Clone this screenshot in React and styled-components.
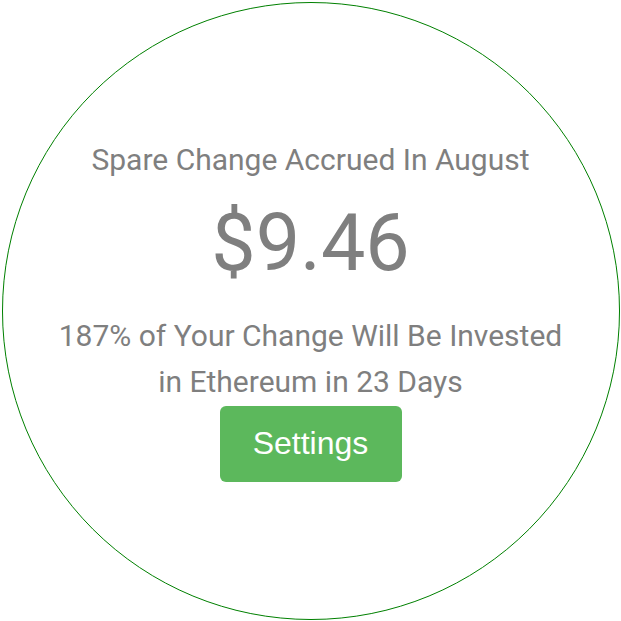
import React from "react";
import styled, { createGlobalStyle } from "styled-components";

const Global = createGlobalStyle`
  html, body { margin: 0; padding: 0; background: #fff; }
  body { font-family: Roboto, "Noto Sans", sans-serif; }
`;

const Page = styled.div`
  width: 621px;
  height: 621px;
  display: flex;
  align-items: center;
  justify-content: center;
`;

const Circle = styled.div`
  box-sizing: border-box;
  width: 618px;
  height: 618px;
  border: 1.5px solid #008000;
  border-radius: 50%;
  display: flex;
  flex-direction: column;
  align-items: center;
  justify-content: flex-start;
  padding-top: 137px;
  color: #7f7f7f;
  text-align: center;
`;

const Title = styled.div`
  font-size: 30px;
  line-height: 40px;
`;

const Amount = styled.div`
  font-size: 79px;
  line-height: 100px;
  margin-top: 13px;
`;

const Note = styled.div`
  font-size: 30px;
  line-height: 46px;
  margin-top: 20px;
`;

const Button = styled.button`
  margin-top: 1px;
  background: #5cb85c;
  color: #fff;
  border: none;
  border-radius: 6px;
  font-family: "Liberation Sans", Arial, sans-serif;
  font-size: 32px;
  width: 182px;
  height: 76px;
  padding: 0;
`;

export default function App() {
  return (
    <>
      <Global />
      <Page>
        <Circle>
          <Title>Spare Change Accrued In August</Title>
          <Amount>$9.46</Amount>
          <Note>
            187% of Your Change Will Be Invested
            <br />
            in Ethereum in 23 Days
          </Note>
          <Button>Settings</Button>
        </Circle>
      </Page>
    </>
  );
}
